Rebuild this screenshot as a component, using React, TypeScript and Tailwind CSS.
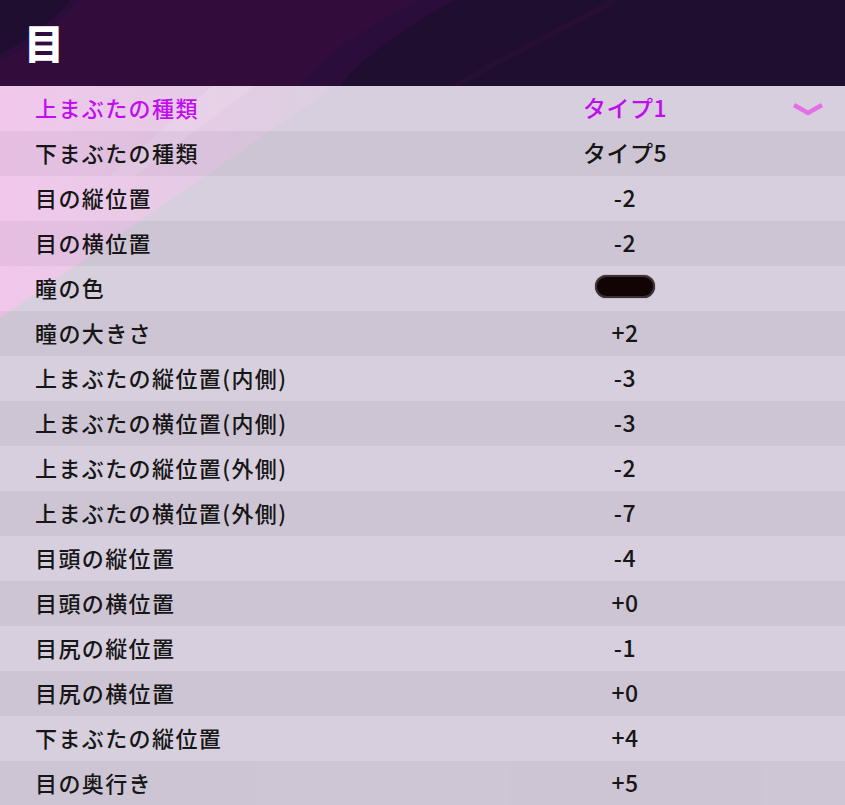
import React from "react";

type Row = {
	label: string;
	value?: string;
	swatch?: string;
	selected?: boolean;
};

const ROWS: Row[] = [
	{ label: "上まぶたの種類", value: "タイプ1", selected: true },
	{ label: "下まぶたの種類", value: "タイプ5" },
	{ label: "目の縦位置", value: "-2" },
	{ label: "目の横位置", value: "-2" },
	{ label: "瞳の色", swatch: "#120404" },
	{ label: "瞳の大きさ", value: "+2" },
	{ label: "上まぶたの縦位置(内側)", value: "-3" },
	{ label: "上まぶたの横位置(内側)", value: "-3" },
	{ label: "上まぶたの縦位置(外側)", value: "-2" },
	{ label: "上まぶたの横位置(外側)", value: "-7" },
	{ label: "目頭の縦位置", value: "-4" },
	{ label: "目頭の横位置", value: "+0" },
	{ label: "目尻の縦位置", value: "-1" },
	{ label: "目尻の横位置", value: "+0" },
	{ label: "下まぶたの縦位置", value: "+4" },
	{ label: "目の奥行き", value: "+5" },
];

function HeaderBackdrop() {
	return (
		<svg
			className="absolute inset-0 h-full w-full"
			viewBox="0 0 845 86"
			preserveAspectRatio="none"
		>
			<rect width="845" height="86" fill="#1f0e2f" />
			<path
				d="M70 0 L455 0 C400 30 360 60 340 86 L0 86 L0 55 C25 40 55 20 70 0 Z"
				fill="#2a0d3b"
			/>
			<path
				d="M80 0 L420 0 C370 25 320 55 300 86 L0 86 L0 62 C30 45 60 22 80 0 Z"
				fill="#320d3b"
			/>
			<path
				d="M615 0 C560 30 500 60 455 86"
				stroke="#270f33"
				strokeWidth="6"
				fill="none"
			/>
		</svg>
	);
}

function ListBackdrop() {
	return (
		<svg
			className="absolute inset-0 h-full w-full"
			viewBox="0 0 845 720"
			preserveAspectRatio="none"
		>
			<defs>
				<linearGradient id="pink" x1="0" y1="0" x2="1" y2="0">
					<stop offset="0" stopColor="#f6c6ef" stopOpacity="0.85" />
					<stop offset="0.6" stopColor="#f0c8ec" stopOpacity="0.55" />
					<stop offset="1" stopColor="#ecd0ec" stopOpacity="0.25" />
				</linearGradient>
			</defs>
			<path d="M0 0 L335 0 L0 232 Z" fill="url(#pink)" />
			<path d="M212 0 L255 0 L135 90 L110 90 Z" fill="#ffffff" opacity="0.12" />
		</svg>
	);
}

function Chevron() {
	return (
		<svg width="30" height="14" viewBox="0 0 30 14">
			<path
				d="M1 3 L15 11 L29 3"
				stroke="#e56ee9"
				strokeWidth="4.5"
				fill="none"
				strokeLinejoin="miter"
			/>
		</svg>
	);
}

export default function App() {
	return (
		<div
			className="h-[805px] w-[845px] overflow-hidden bg-[#d7cfdd]"
			style={{ fontFamily: '"Noto Sans CJK JP", "Noto Sans", sans-serif' }}
		>
			<header className="relative flex h-[86px] items-center px-[24px]">
				<HeaderBackdrop />
				<h1 className="relative -mt-[2px] text-[40px] font-black leading-none text-white">
					目
				</h1>
			</header>

			<div className="relative">
				<ListBackdrop />
				{ROWS.map((row, i) => (
					<div
						key={i}
						className={
							"relative flex h-[45px] items-center " +
							(i % 2 === 1 ? "bg-[rgba(60,30,70,0.055)]" : "")
						}
					>
						<div
							className={
								"-mt-[2px] w-[505px] pl-[35px] text-[22px] font-medium tracking-[1.4px] " +
								(row.selected ? "text-[#c20cf0]" : "text-[#161616]")
							}
						>
							{row.label}
						</div>
						<div
							className={
								"-mt-[2px] flex w-[240px] justify-center text-[23px] font-medium tracking-[0.5px] " +
								(row.selected ? "text-[#c20cf0]" : "text-[#161616]")
							}
						>
							{row.swatch ? (
								<span
									className="mb-[3px] h-[23px] w-[60px] rounded-full border-2 border-[#3b3036] shadow-[0_0_1px_#3b3036]"
									style={{ backgroundColor: row.swatch }}
								/>
							) : (
								row.value
							)}
						</div>
						<div className="flex flex-1 justify-end pr-[22px]">
							{row.selected && <Chevron />}
						</div>
					</div>
				))}
			</div>
		</div>
	);
}
